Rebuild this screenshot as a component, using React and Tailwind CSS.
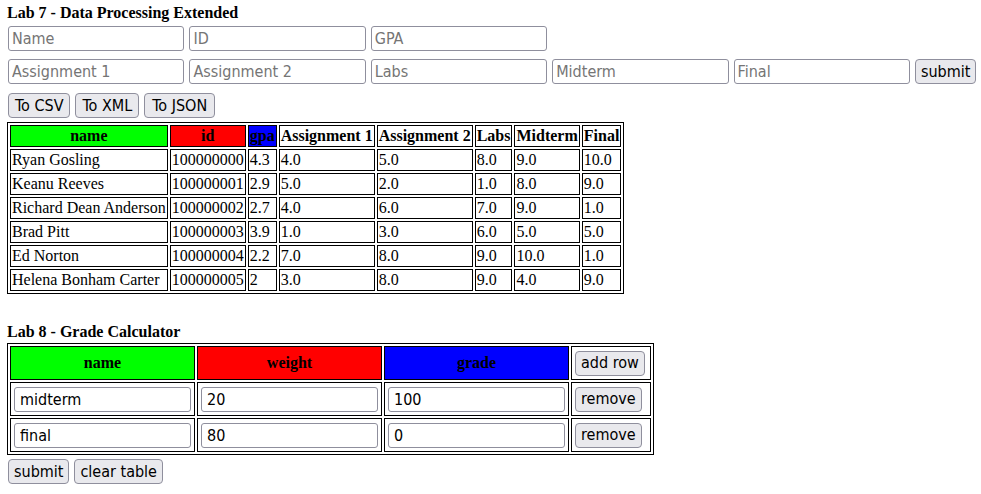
import React from "react";

const sans = "font-['DejaVu_Sans_Condensed','Liberation_Sans',sans-serif]";
const inputCls = `${sans} h-[25px] w-[176.4px] border border-[#8f8f9d] rounded-[3px] px-[3px] text-[16px] text-black placeholder:text-[#757575] bg-white outline-none`;
const btnCls = `${sans} h-[25px] px-[5px] border border-[#8f8f9d] rounded-[4px] bg-[#e9e9ed] text-[16px] font-normal text-black leading-none`;

const people = [
  ["Ryan Gosling", "100000000", "4.3", "4.0", "5.0", "8.0", "9.0", "10.0"],
  ["Keanu Reeves", "100000001", "2.9", "5.0", "2.0", "1.0", "8.0", "9.0"],
  ["Richard Dean Anderson", "100000002", "2.7", "4.0", "6.0", "7.0", "9.0", "1.0"],
  ["Brad Pitt", "100000003", "3.9", "1.0", "3.0", "6.0", "5.0", "5.0"],
  ["Ed Norton", "100000004", "2.2", "7.0", "8.0", "9.0", "10.0", "1.0"],
  ["Helena Bonham Carter", "100000005", "2", "3.0", "8.0", "9.0", "4.0", "9.0"],
];

const headers = [
  ["name", "bg-[#00ff00]"],
  ["id", "bg-[#ff0000]"],
  ["gpa", "bg-[#0000ff]"],
  ["Assignment 1", "bg-white"],
  ["Assignment 2", "bg-white"],
  ["Labs", "bg-white"],
  ["Midterm", "bg-white"],
  ["Final", "bg-white"],
];

export default function App() {
  return (
    <div className="bg-white w-[981px] h-[494px] overflow-hidden px-[8px] font-['Liberation_Serif',serif] text-black text-[16px]">
      <div className="mt-[4px] -ml-[1px] font-bold leading-[18px]">Lab 7 - Data Processing Extended</div>
      <div className="mt-[4px] flex gap-[5px]">
        <input className={inputCls} placeholder="Name" />
        <input className={inputCls} placeholder="ID" />
        <input className={inputCls} placeholder="GPA" />
      </div>
      <div className="mt-[8px] flex gap-[5px]">
        <input className={inputCls} placeholder="Assignment 1" />
        <input className={inputCls} placeholder="Assignment 2" />
        <input className={inputCls} placeholder="Labs" />
        <input className={inputCls} placeholder="Midterm" />
        <input className={inputCls} placeholder="Final" />
        <button className={btnCls}>submit</button>
      </div>
      <div className="mt-[9px] flex gap-[5px]">
        <button className={`${btnCls} h-[24px] px-[6px]`}>To CSV</button>
        <button className={`${btnCls} h-[24px] px-[6px]`}>To XML</button>
        <button className={`${btnCls} h-[24px] px-[7px]`}>To JSON</button>
      </div>
      <table className="mt-[4px] -ml-[1px] border-separate border-spacing-[2px] border border-black leading-[18px]">
        <thead>
          <tr>
            {headers.map(([h, bg]) => (
              <th key={h} className={`border border-black p-[1px] font-bold text-center ${bg}`}>{h}</th>
            ))}
          </tr>
        </thead>
        <tbody>
          {people.map((row) => (
            <tr key={row[1]}>
              {row.map((c, i) => (
                <td key={i} className="border border-black p-[1px] text-left">{c}</td>
              ))}
            </tr>
          ))}
        </tbody>
      </table>
      <div className="mt-[29px] -ml-[1px] font-bold leading-[18px]">Lab 8 - Grade Calculator</div>
      <table className="mt-[2px] -ml-[1px] border-separate border-spacing-[2px] border border-black leading-[18px]">
        <thead>
          <tr>
            <th className="border border-black px-[3px] py-[3.5px] bg-[#00ff00] font-bold text-center">name</th>
            <th className="border border-black px-[3px] py-[3.5px] bg-[#ff0000] font-bold text-center">weight</th>
            <th className="border border-black px-[3px] py-[3.5px] bg-[#0000ff] font-bold text-center">grade</th>
            <th className="border border-black pl-[3px] pr-[5px] py-[3.5px] text-left">
              <button className={btnCls}>add row</button>
            </th>
          </tr>
        </thead>
        <tbody>
          {[["midterm", "20", "100"], ["final", "80", "0"]].map((r) => (
            <tr key={r[0]}>
              {r.map((v, i) => (
                <td key={i} className="border border-black px-[3px] py-[3.5px]">
                  <input className={`${inputCls} w-[177px] px-[5px]`} defaultValue={v} />
                </td>
              ))}
              <td className="border border-black px-[3px] py-[3.5px] text-left">
                <button className={btnCls}>remove</button>
              </td>
            </tr>
          ))}
        </tbody>
      </table>
      <div className="mt-[4px] flex gap-[5px]">
        <button className={btnCls}>submit</button>
        <button className={btnCls}>clear table</button>
      </div>
    </div>
  );
}
